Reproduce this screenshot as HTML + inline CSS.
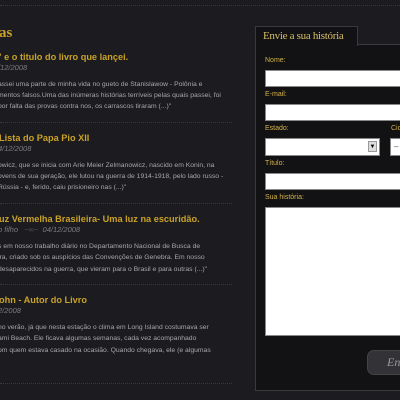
<!DOCTYPE html>
<html><head><meta charset="utf-8"><style>
*{margin:0;padding:0;box-sizing:border-box}
body{width:400px;height:400px;overflow:hidden;background:#1c1b1f;font-family:"Liberation Sans",sans-serif;position:relative}
.a{position:absolute;white-space:nowrap}
.t{color:#c9a227;font-weight:bold;font-size:9.2px}
.d{color:#7d7b80;font-style:italic;font-size:7.5px}
.b{color:#a9a7ab;font-size:6.8px}
.sep{position:absolute;left:0;width:232px;border-top:1px dotted #3a393e;height:0}
.lab{color:#d3b349;font-size:7px;position:absolute;left:265px}
.in{position:absolute;background:#fff;border:1px solid #888}
</style></head><body>
<div class="sep" style="top:5px;width:400px"></div>
<div class="a" style="left:-1px;top:25px;color:#c9a227;font-family:'Liberation Serif',serif;font-size:15px;font-weight:bold">as</div>

<div class="a t" style="left:-3px;top:52px">” e o titulo do livro que lançei.</div>
<div class="a d" style="left:-2px;top:63px">/12/2008</div>
<div class="a b" style="left:-2px;top:81px">assei uma parte de minha vida no gueto de Stanislawow - Polônia e</div>
<div class="a b" style="left:-2px;top:92px">mentos falsos.Uma das inúmeras histórias terríveis pelas quais passei, foi</div>
<div class="a b" style="left:-2px;top:103px">por falta das provas contra nos, os carrascos tiraram (...)"</div>
<div class="sep" style="top:122px"></div>

<div class="a t" style="left:-1px;top:133px">Lista do Papa Pio XII</div>
<div class="a d" style="left:-2px;top:144px">4/12/2008</div>
<div class="a b" style="left:-2px;top:162px">owicz, que se inicia com Arie Meier Zelmanowicz, nascido em Konin, na</div>
<div class="a b" style="left:-2px;top:173px">ovens de sua geração, ele lutou na guerra de 1914-1918, pelo lado russo -</div>
<div class="a b" style="left:-2px;top:184px"> Rússia - e, ferido, caiu prisioneiro nas (...)"</div>
<div class="sep" style="top:203px"></div>

<div class="a t" style="left:-1px;top:214px">uz Vermelha Brasileira- Uma luz na escuridão.</div>
<div class="a d" style="left:-2px;top:225px">o filho &nbsp;&nbsp;<span style="color:#555">~∞~</span>&nbsp; 04/12/2008</div>
<div class="a b" style="left:-2px;top:243px">s em nosso trabalho diário no Departamento Nacional de Busca de</div>
<div class="a b" style="left:-2px;top:254px">ira, criado sob os auspícios das Convenções de Genebra. Em nosso</div>
<div class="a b" style="left:-2px;top:266px">desaparecidos na guerra, que vieram para o Brasil e para outras (...)"</div>
<div class="sep" style="top:284px"></div>

<div class="a t" style="left:-1px;top:295px">ohn - Autor do Livro</div>
<div class="a d" style="left:-2px;top:306px">2/2008</div>
<div class="a b" style="left:-2px;top:324px">no verão, já que nesta estação o clima em Long Island costumava ser</div>
<div class="a b" style="left:-2px;top:335px">ami Beach. Ele ficava algumas semanas, cada vez acompanhado</div>
<div class="a b" style="left:-2px;top:347px">om quem estava casado na ocasião. Quando chegava, ele (e algumas</div>
<div class="sep" style="top:383px"></div>

<div style="position:absolute;left:255px;top:44px;width:150px;height:347px;background:#121114;border:1px solid #3a393d"></div>
<div style="position:absolute;left:255px;top:26px;width:103px;height:20px;background:#121114;border:1px solid #3a393d;border-bottom:none"></div>
<div class="a" style="left:263px;top:30px;color:#d8bf6a;font-family:'Liberation Serif',serif;font-size:11px;letter-spacing:-0.3px">Envie a sua história</div>

<div class="lab" style="top:57px">Nome:</div>
<div class="in" style="left:265px;top:70px;width:140px;height:17px"></div>
<div class="lab" style="top:91px">E-mail:</div>
<div class="in" style="left:265px;top:104px;width:140px;height:17px"></div>
<div class="lab" style="top:125px">Estado:</div>
<div class="lab" style="top:125px;left:391px">Cid</div>
<div class="in" style="left:265px;top:138px;width:115px;height:18px"></div>
<div style="position:absolute;left:368px;top:141px;width:9px;height:11px;background:#ddd;border:1px solid #999;font-size:6px;text-align:center;line-height:10px">▼</div>
<div class="in" style="left:390px;top:138px;width:15px;height:18px;font-size:8px;color:#555;padding-left:3px;line-height:15px">–</div>
<div class="lab" style="top:160px">Título:</div>
<div class="in" style="left:265px;top:173px;width:140px;height:17px"></div>
<div class="lab" style="top:194px">Sua história:</div>
<div class="in" style="left:265px;top:207px;width:140px;height:129px"></div>
<div style="position:absolute;left:367px;top:350px;width:45px;height:25px;background:#333236;border:1px solid #444;border-radius:7px"></div>
<div class="a" style="left:387px;top:355px;color:#9a999d;font-family:'Liberation Serif',serif;font-style:italic;font-size:12px">En</div>
</body></html>
